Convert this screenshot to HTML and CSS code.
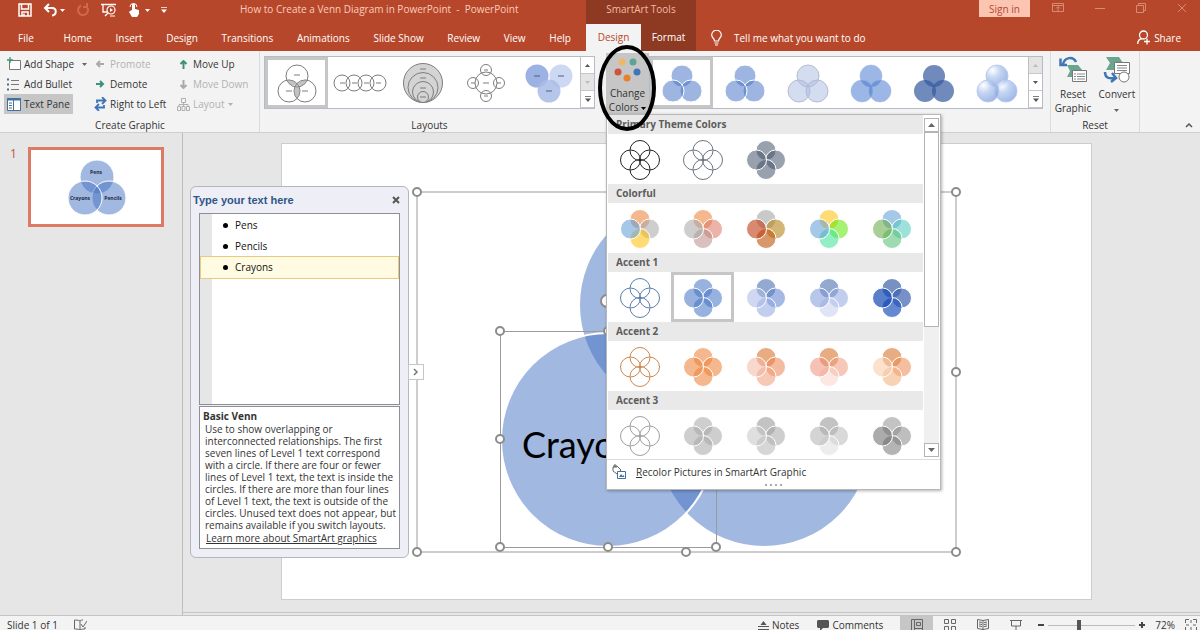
FILE: index.html
```html
<!DOCTYPE html>
<html lang="en">

<head>
    <meta charset="utf-8">
    <title>How to Create a Venn Diagram in PowerPoint - PowerPoint</title>
    <link rel="stylesheet" href="styles.css">
</head>

<body>

    <svg class="defs" width="0" height="0">
        <symbol id="flower" viewBox="-21 -21 42 42">
            <circle class="c-top" cx="0" cy="-9.5" r="10" />
            <circle class="c-right" cx="9.5" cy="0" r="10" />
            <circle class="c-bottom" cx="0" cy="9.5" r="10" />
            <circle class="c-left" cx="-9.5" cy="0" r="10" />
        </symbol>
        <symbol id="venn" viewBox="-30 -23 60 46">
            <circle cx="0" cy="-7" r="11" />
            <circle cx="9" cy="8" r="11" />
            <circle cx="-9" cy="8" r="11" />
        </symbol>
        <symbol id="up" viewBox="0 0 7 4"><path d="M0 4h7L3.500 0z" /></symbol>
        <symbol id="down" viewBox="0 0 7 4"><path d="M0 0h7L3.500 4z" /></symbol>
        <symbol id="more" viewBox="0 0 7 7"><path d="M0 0h7v1H0zM0 3h7L3.500 7z" /></symbol>
        <radialGradient id="gloss" cx=".3" cy=".25" r=".8">
            <stop offset="0" stop-color="#fff" />
            <stop offset=".4" stop-color="#b4caf0" />
            <stop offset="1" stop-color="#7f9fdc" />
        </radialGradient>
    </svg>

    <header class="top">
        <div class="title-row">
            <div class="quick">
                <button aria-label="Save"><svg width="14" height="14" viewBox="0 0 14 14"><path d="M1 1h12v12H1zM3.500 1v5h7V1M4 13V9h6v4M6 10.500V13" fill="none" stroke="#fff" stroke-width="1.500" /></svg></button>
                <button aria-label="Undo"><svg width="22" height="14" viewBox="0 0 22 14"><path d="M6 1L2 5l4 4M2 5h7c5 0 5 7 0 7.500" fill="none" stroke="#fff" stroke-width="2" /><path d="M17 6h5l-2.500 3z" fill="#fff" /></svg></button>
                <button aria-label="Redo"><svg width="14" height="14" viewBox="0 0 14 14"><path d="M5 2.500A5 5 0 1 0 11 4M11 0v4H7" fill="none" stroke="#d0694c" stroke-width="2" /></svg></button>
                <button aria-label="Start from beginning"><svg width="16" height="14" viewBox="0 0 16 14"><path d="M0 1.500h15M2 2v7h4M4 13l3-3" fill="none" stroke="#fff" stroke-width="1.300" /><circle cx="10" cy="7" r="4" fill="#b7472a" stroke="#fff" stroke-width="1.200" /><path d="M9 5l3 2-3 2z" fill="#fff" /><path d="M9 13h5" stroke="#fff" /></svg></button>
                <button aria-label="Touch mode"><svg width="22" height="14" viewBox="0 0 22 14"><path d="M4 7V2a1.500 1.500 0 0 1 3 0v4l4 1v4l-2 3H4L1 9l1-1z" fill="#fff" /><path d="M2 4a3.500 3.500 0 1 1 7 0" fill="none" stroke="#fff" /><path d="M17 6h5l-2.500 3z" fill="#fff" /></svg></button>
                <button aria-label="Customize"><svg width="6" height="6" fill="#fff"><use href="#more" /></svg></button>
            </div>
            <div class="doc-title">How to Create a Venn Diagram in PowerPoint&nbsp; -&nbsp; PowerPoint</div>
        </div>
        <div class="context">SmartArt Tools</div>
        <div class="window-row">
            <button class="sign-in">Sign in</button>
            <div class="win-buttons">
                <button aria-label="Ribbon options"><svg width="12" height="10" viewBox="0 0 12 10"><path d="M.5.5h11v8H.5zM.5 2.500h11M6 8V4M4 5.500l2-2 2 2" /></svg></button>
                <button aria-label="Minimize"><svg width="10" height="10" viewBox="0 0 10 10"><path d="M0 5.500h10" /></svg></button>
                <button aria-label="Restore"><svg width="10" height="10" viewBox="0 0 10 10"><path d="M.5 2.500h7v7h-7zM2.500 2V.5h7v7H8" /></svg></button>
                <button aria-label="Close"><svg width="10" height="10" viewBox="0 0 10 10"><path d="M1 1l8 8M9 1L1 9" /></svg></button>
            </div>
        </div>
        <nav class="tabs">
            <a href="#">File</a>
            <a href="#">Home</a>
            <a href="#">Insert</a>
            <a href="#">Design</a>
            <a href="#">Transitions</a>
            <a href="#">Animations</a>
            <a href="#">Slide Show</a>
            <a href="#">Review</a>
            <a href="#">View</a>
            <a href="#">Help</a>
        </nav>
        <nav class="context-tabs">
            <a href="#" class="active">Design</a>
            <a href="#">Format</a>
        </nav>
        <div class="tell-row">
            <a href="#" class="tell"><svg width="11" height="16" viewBox="0 0 11 16"><path d="M3.500 11C3.500 8 .7 8 .7 5a4.800 4.800 0 0 1 9.600 0c0 3-2.800 3-2.800 6zM3.500 13h4M4 15h3" fill="none" stroke="#fff" stroke-width="1.200" /></svg>Tell me what you want to do</a>
            <a href="#" class="share"><svg width="13" height="15" viewBox="0 0 13 15"><circle cx="6.500" cy="5" r="4" fill="none" stroke="#fff" stroke-width="1.300" /><path d="M.7 14c0-3 2-5 4.500-5.500M10 8.500v6M7 11.500h6" fill="none" stroke="#fff" stroke-width="1.300" /></svg>Share</a>
        </div>
    </header>

    <section class="ribbon">
        <div class="group create">
            <div class="commands">
                <button><svg width="14" height="14" viewBox="0 0 14 14"><path d="M2.500 3.500h11v9h-11z" fill="#fff" stroke="#777" /><path d="M3 0v6M0 3h6" stroke="#3c9277" stroke-width="1.300" /></svg>Add Shape<svg class="caret" width="5" height="3"><use href="#down" /></svg></button>
                <button disabled><svg class="arrow" width="9" height="8" viewBox="0 0 9 8"><path d="M8 4H1M4 1L1 4l3 3" /></svg>Promote</button>
                <button><svg class="arrow green" width="9" height="9" viewBox="0 0 9 9"><path d="M4.500 9V1M1.500 4l3-3 3 3" /></svg>Move Up</button>
                <button><svg width="14" height="13" viewBox="0 0 14 13"><path d="M0 1.500h2M0 6.500h2M0 11.500h2" stroke="#41719c" stroke-width="2" /><path d="M4 2.500h8M4 6.500h8M4 11.500h8" stroke="#777" /></svg>Add Bullet</button>
                <button><svg class="arrow green" width="9" height="8" viewBox="0 0 9 8"><path d="M0 4h7M4 1l3 3-3 3" /></svg>Demote</button>
                <button disabled><svg class="arrow" width="9" height="9" viewBox="0 0 9 9"><path d="M4.500 0v8M1.500 5l3 3 3-3" /></svg>Move Down</button>
                <button class="pressed"><svg width="14" height="13" viewBox="0 0 14 13"><path d="M.5.5h13v12H.5z" fill="#fff" stroke="#41719c" /><path d="M0 1.500h14" stroke="#41719c" stroke-width="2" /><path d="M6.500 2v10M2 5h3M2 7.500h3M2 10h3" stroke="#41719c" /></svg>Text Pane</button>
                <button><svg width="13" height="14" viewBox="0 0 13 14"><path d="M3 6V3.500h8M8 0l3.500 3.500L8 7M10 8v2.500H2M5 7l-3.500 3.500L5 14" fill="none" stroke="#3f76b5" stroke-width="1.800" /></svg>Right to Left</button>
                <button disabled><svg width="13" height="13" viewBox="0 0 13 13"><path d="M4.500.5h4v4h-4zM.5 8.500h3v4h-3zM5 8.500h3v4H5zM9.500 8.500h3v4h-3zM6.500 4.500v4M2 8.500v-2h9v2" fill="none" stroke="#b0b0b0" /></svg>Layout<svg class="caret near" width="5" height="3"><use href="#down" /></svg></button>
            </div>
            <div class="group-label">Create Graphic</div>
        </div>

        <div class="group layouts">
            <div class="gallery">
                <button class="item chosen" aria-label="Basic Venn"><svg class="line-art" viewBox="-30 -23 60 46"><circle cx="0" cy="-7" r="11" /><circle cx="-8" cy="8" r="11" /><circle cx="8" cy="8" r="11" /><path class="shade" d="M-10.500-3C-5-4-1-1 0 2c2-3 6-6 10.500-5C7 4 4 4 0 1c-4 3-7 2-10.500-4zM0 1c4 5 4 10 0 15-4-5-4-10 0-15z" /><path d="M-3-8h6M-11 8h6M5 8h6" /></svg></button>
                <button class="item" aria-label="Linear Venn"><svg class="line-art" viewBox="-30 -23 60 46"><circle cx="-18" cy="0" r="8" /><circle cx="-6" cy="0" r="8" /><circle cx="6" cy="0" r="8" /><circle cx="18" cy="0" r="8" /><path d="M-20 0h5M-8 0h5M4 0h5M16 0h5" /></svg></button>
                <button class="item" aria-label="Stacked Venn"><svg class="line-art grey" viewBox="-30 -23 60 46"><circle cx="0" cy="0" r="19.500" /><circle cx="0" cy="4.500" r="15" /><circle cx="0" cy="9" r="10.500" /><circle cx="0" cy="14" r="5.500" /><path d="M-3-14h6M-3-5h6M-3 5h6M-3 14h6" /></svg></button>
                <button class="item" aria-label="Radial Venn"><svg class="line-art" viewBox="-30 -23 60 46"><circle cx="0" cy="0" r="11" /><circle cx="0" cy="-13" r="5.500" /><circle cx="0" cy="13" r="5.500" /><circle cx="-13" cy="0" r="5.500" /><circle cx="13" cy="0" r="5.500" /><path d="M-3 0h6M-2-13h4M-2 13h4M-15 0h4M11 0h4" /></svg></button>
                <button class="item" aria-label="Interconnected Rings"><svg viewBox="-30 -23 60 46"><circle cx="-12" cy="-7" r="11.500" fill="#9bb2e2" /><circle cx="12" cy="-7" r="11.500" fill="#cdd8f3" /><circle cx="0" cy="8" r="11.500" fill="#a9bce8" fill-opacity=".85" /><path d="M-15-7h6M9-7h6M-3 8h6" stroke="#4b5f92" /></svg></button>
                <div class="scroller">
                    <button aria-label="Row up"><svg width="5" height="3"><use href="#up" /></svg></button>
                    <button aria-label="Row down" disabled><svg width="5" height="3"><use href="#down" /></svg></button>
                    <button aria-label="More layouts"><svg width="6" height="6"><use href="#more" /></svg></button>
                </div>
            </div>
            <div class="group-label">Layouts</div>
        </div>

        <div class="group styles">
            <div class="color-picker">
                <button class="change-colors">
                    <svg width="28" height="26" viewBox="0 0 28 26"><circle cx="8" cy="5" r="3.500" fill="#ebb968" /><circle cx="19" cy="5" r="3.500" fill="#5ea492" /><circle cx="4" cy="15" r="3.500" fill="#d2513c" /><circle cx="23" cy="15" r="3.500" fill="#3f76b5" /><circle cx="13" cy="21" r="3.500" fill="#e5812f" /></svg>
                    <span>Change</span>
                    <span>Colors <svg width="5" height="3"><use href="#down" /></svg></span>
                </button>
                <div class="menu">
                    <div class="menu-body">
                        <div class="menu-list" id="menuList"></div>
                        <div class="scrollbar">
                            <button aria-label="Scroll up"><svg width="7" height="4"><use href="#up" /></svg></button>
                            <div class="thumb"></div>
                            <button aria-label="Scroll down"><svg width="7" height="4"><use href="#down" /></svg></button>
                        </div>
                    </div>
                    <button class="recolor"><svg width="15" height="15" viewBox="0 0 15 15"><path d="M2 3l4-1 4 4-4 4-4-3zM3 4V1h2v3" fill="#fff" stroke="#666" /><path d="M6.500 7.500h8v7h-8z" fill="#fff" stroke="#41719c" /><path d="M8 13l2-3 1.500 2 1-1 1 2z" fill="#41719c" /></svg><span><u>R</u>ecolor Pictures in SmartArt Graphic</span></button>
                    <div class="grip"><i></i><i></i><i></i><i></i></div>
                </div>
                <svg class="marker" viewBox="0 0 60 88"><ellipse cx="30" cy="44" rx="27" ry="41" /></svg>
            </div>
            <div class="gallery">
                <button class="item chosen" aria-label="Simple Fill"><svg class="v-simple"><use href="#venn" /></svg></button>
                <button class="item" aria-label="White Outline"><svg class="v-simple"><use href="#venn" /></svg></button>
                <button class="item" aria-label="Subtle Effect"><svg class="v-subtle"><use href="#venn" /></svg></button>
                <button class="item" aria-label="Moderate Effect"><svg class="v-moderate"><use href="#venn" /></svg></button>
                <button class="item" aria-label="Intense Effect"><svg class="v-intense"><use href="#venn" /></svg></button>
                <button class="item" aria-label="Polished"><svg class="v-polished"><use href="#venn" /></svg></button>
                <div class="scroller">
                    <button aria-label="Row up" disabled><svg width="5" height="3"><use href="#up" /></svg></button>
                    <button aria-label="Row down"><svg width="5" height="3"><use href="#down" /></svg></button>
                    <button aria-label="More styles"><svg width="6" height="6"><use href="#more" /></svg></button>
                </div>
            </div>
        </div>

        <div class="group reset">
            <div class="big-buttons">
                <button><svg width="28" height="27" viewBox="0 0 28 27"><path d="M8 9h11l5 6-3 6H8l3-6z" fill="#6ba58e" /><path d="M13.500 14.500h14v11h-14z" fill="#fff" stroke="#777" /><path d="M15 18h2m1 0h8M15 20.500h2m1 0h8M15 23h2m1 0h8" stroke="#888" /><path d="M17 6C14 0 6 1 4 8M1.500 2.500V9H8" fill="none" stroke="#3f76b5" stroke-width="2.500" /></svg><span>Reset</span><span>Graphic</span></button>
                <button><svg width="28" height="27" viewBox="0 0 28 27"><path d="M3 1h13l4 6-4 7H3l4-7z" fill="#6ba58e" /><path d="M11.500 6.500h15v11h-15z" fill="#fff" stroke="#777" /><path d="M14 9.500h10M14 12h10M14 14.500h10" stroke="#888" /><circle cx="21" cy="21" r="5" fill="#fff" stroke="#777" /><path d="M2 16c0 6 4 7 10 6M9 17l4 5-5 4" fill="none" stroke="#3f76b5" stroke-width="2.500" /></svg><span>Convert</span><span><svg width="5" height="3"><use href="#down" /></svg></span></button>
            </div>
            <div class="group-label">Reset</div>
        </div>
        <button class="collapse" aria-label="Collapse the ribbon"><svg width="8" height="6" viewBox="0 0 8 6"><path d="M1 5l3-3 3 3" fill="none" stroke="#555" stroke-width="1.500" /></svg></button>
    </section>

    <main class="work">
        <aside class="thumbs">
            <span class="num">1</span>
            <a href="#" class="thumb-slide" aria-label="Slide 1">
                <svg viewBox="0 0 130 74">
                    <g fill="#4472c4" fill-opacity=".5" stroke="#fff"><circle cx="66" cy="27" r="17" /><circle cx="78" cy="48" r="17" /><circle cx="54" cy="48" r="17" /></g>
                    <text x="65" y="24">Pens</text>
                    <text x="49" y="50">Crayons</text>
                    <text x="82" y="50">Pencils</text>
                </svg>
            </a>
        </aside>

        <div class="stage">
            <div class="slide">
                <svg class="diagram" viewBox="410 185 553 374">
                    <g class="shapes">
                        <circle cx="686" cy="305" r="107" />
                        <circle cx="764" cy="440" r="107" />
                        <circle cx="608" cy="440" r="107" />
                    </g>
                    <text x="522" y="458">Crayons</text>
                    <path class="frame" d="M417 192h539v360H417zM500.500 331.500h216v216h-216z" />
                    <g class="handles">
                        <circle cx="417" cy="192" r="4" />
                        <circle cx="956" cy="192" r="4" />
                        <circle cx="956" cy="372" r="4" />
                        <circle cx="417" cy="552" r="4" />
                        <circle cx="686" cy="552" r="4" />
                        <circle cx="956" cy="552" r="4" />
                        <circle cx="500" cy="331" r="4" />
                        <circle cx="608" cy="331" r="4" />
                        <circle cx="500" cy="439" r="4" />
                        <circle cx="500" cy="547" r="4" />
                        <circle cx="608" cy="547" r="4" />
                        <circle cx="716" cy="547" r="4" />
                        <circle cx="607" cy="301" r="6" />
                    </g>
                </svg>
            </div>

            <section class="text-pane">
                <div class="pane-head">
                    <h2>Type your text here</h2>
                    <button aria-label="Close"><svg width="8" height="8" viewBox="0 0 8 8"><path d="M1 1l6 6M7 1L1 7" stroke="#555" stroke-width="2" /></svg></button>
                </div>
                <ul>
                    <li>Pens</li>
                    <li>Pencils</li>
                    <li class="current">Crayons</li>
                </ul>
                <div class="about">
                    <h3>Basic Venn</h3>
                    <p>Use to show overlapping or<br>interconnected relationships. The first<br>seven lines of Level 1 text correspond<br>with a circle. If there are four or fewer<br>lines of Level 1 text, the text is inside the<br>circles. If there are more than four lines<br>of Level 1 text, the text is outside of the<br>circles. Unused text does not appear, but<br>remains available if you switch layouts.</p>
                    <a href="#">Learn more about SmartArt graphics</a>
                </div>
                <button class="pane-toggle" aria-label="Toggle text pane"><svg width="6" height="8" viewBox="0 0 6 8"><path d="M1 1l3 3-3 3" fill="none" stroke="#777" stroke-width="1.500" /></svg></button>
            </section>
        </div>
    </main>

    <footer class="status">
        <span>Slide 1 of 1</span>
        <button class="spell" aria-label="Spelling"><svg width="13" height="12" viewBox="0 0 13 12"><path d="M6 2v9M6 2C4 1 2 1 .5 1v9C2 10 4 10 6 11c2-1 3-1 5-1V8M6 2c1-1 2-1 3-1M7 5l2 3 4-6" fill="none" stroke="#666" /></svg></button>
        <button class="notes"><svg width="11" height="9" viewBox="0 0 11 9"><path d="M0 5.500h11M0 8.500h11" stroke="#555" /><path d="M2.500 4h6L5.500 0z" fill="#555" /></svg>Notes</button>
        <button class="comments"><svg width="12" height="11" viewBox="0 0 12 11"><path d="M1 0h10l1 1v6l-1 1H6l-3 3V8H1L0 7V1z" fill="#555" /></svg>Comments</button>
        <div class="views">
            <button class="on" aria-label="Normal"><svg width="12" height="12" viewBox="0 0 12 12"><path d="M.5.5h11v11H.5zM3.500 1v10M5.500 3.500h4v3h-4zM4 9.500h7" /></svg></button>
            <button aria-label="Slide sorter"><svg width="12" height="12" viewBox="0 0 12 12"><path d="M.5.5h4v4h-4zM7.500.5h4v4h-4zM.5 7.500h4v4h-4zM7.500 7.500h4v4h-4z" /></svg></button>
            <button aria-label="Reading view"><svg width="12" height="12" viewBox="0 0 12 12"><path d="M6 2v9M6 1.500L.5.5v9l5.500 1 5.500-1v-9zM2 3l3 .5M2 5l3 .5M2 7l3 .5M10 3l-3 .5M10 5l-3 .5M10 7l-3 .5" /></svg></button>
            <button aria-label="Slide show"><svg width="12" height="12" viewBox="0 0 12 12"><path d="M0 1.500h12M1.500 2v5h9V2M6 7v4M3.500 11.500h5" /></svg></button>
        </div>
        <div class="zoom">
            <button aria-label="Zoom out"><svg width="6" height="6" viewBox="0 0 6 6"><path d="M0 3h6" /></svg></button>
            <input type="range" min="0" max="100" value="35" aria-label="Zoom">
            <button aria-label="Zoom in"><svg width="6" height="6" viewBox="0 0 6 6"><path d="M0 3h6M3 0v6" /></svg></button>
        </div>
        <span class="percent">72%</span>
        <button class="fit" aria-label="Fit slide"><svg width="12" height="12" viewBox="0 0 12 12"><path d="M.5 4V.5H4M8 .5h3.500V4M11.500 8v3.500H8M4 11.500H.5V8M6 1v3M6 8v3M1 6h3M8 6h3" /></svg></button>
    </footer>

    <script>
        // each swatch: colours for top, right, bottom, left and the fill strength
        var sections = [
            ["Primary Theme Colors", [
                { line: "#222" },
                { line: "#6d7584" },
                { fill: ["#44546a", "#44546a", "#44546a", "#44546a"] }
            ]],
            ["Colorful", [
                { fill: ["#ed7d31", "#a5a5a5", "#ffc000", "#5b9bd5"] },
                { fill: ["#ed7d31", "#dc7560", "#b98a86", "#a5a5a5"] },
                { fill: ["#a5a5a5", "#b5851a", "#c0530a", "#bf3a10"], alpha: 0.6 },
                { fill: ["#ffc000", "#5ce800", "#3ae291", "#5b9bd5"] },
                { fill: ["#5b9bd5", "#4cc9bd", "#4fbd70", "#62a840"] }
            ]],
            ["Accent 1", [
                { line: "#5b7fb0" },
                { fill: ["#4472c4", "#4472c4", "#4472c4", "#4472c4"], chosen: true },
                { fill: ["#3c62a8", "#5b80d0", "#8ea6e0", "#a9b8e6"] },
                { fill: ["#3c62a8", "#8ea6e0", "#c4cff0", "#7d98d8"] },
                { fill: ["#3c62a8", "#3c62b0", "#2455bd", "#1348b4"], alpha: 0.7 }
            ]],
            ["Accent 2", [
                { line: "#cf874e" },
                { fill: ["#ed7d31", "#ed7d31", "#ed7d31", "#ed7d31"] },
                { fill: ["#d6681c", "#ec8350", "#ee9a78", "#f3b7a4"] },
                { fill: ["#d6681c", "#f09a7c", "#f9d3cb", "#ee9078"] },
                { fill: ["#d6681c", "#ec8850", "#f2ad78", "#f6cba8"] }
            ]],
            ["Accent 3", [
                { line: "#a0a0a0" },
                { fill: ["#a5a5a5", "#a5a5a5", "#a5a5a5", "#a5a5a5"] },
                { fill: ["#929292", "#a5a5a5", "#b5b5b5", "#c5c5c5"] },
                { fill: ["#929292", "#bababa", "#dedede", "#b0b0b0"] },
                { fill: ["#929292", "#888", "#777", "#666"] }
            ]]
        ];

        var html = "";
        sections.forEach(function (section) {
            html += "<h4>" + section[0] + "</h4><div class='swatches'>";
            section[1].forEach(function (s, i) {
                var css;
                if (s.line) {
                    css = "--line:" + s.line + ";--alpha:0";
                } else {
                    css = "--t:" + s.fill[0] + ";--r:" + s.fill[1] + ";--b:" + s.fill[2] + ";--l:" + s.fill[3] + ";--alpha:" + (s.alpha || 0.55);
                }
                html += "<button class='swatch" + (s.chosen ? " chosen" : "") + "' aria-label='" + section[0] + " " + (i + 1) + "'>";
                html += "<svg width='42' height='42' style='" + css + "'><use href='#flower'/></svg></button>";
            });
            html += "</div>";
        });
        document.getElementById("menuList").innerHTML = html;
    </script>
</body>

</html>
```
FILE: styles.css
```css
* {
    box-sizing: border-box;
}

body,
html {
    margin: 0;
    height: 100%;
}

body {
    display: flex;
    flex-direction: column;
    overflow: hidden;
    background: #e6e6e6;
    color: #333;
    font-family: "Open Sans", "Noto Sans", sans-serif;
    font-size: 10px;
    line-height: 14px;
}

button {
    display: flex;
    align-items: center;
    justify-content: center;
    margin: 0;
    padding: 0;
    border: 0;
    background: none;
    color: inherit;
    font: inherit;
    white-space: nowrap;
}

a {
    color: inherit;
    text-decoration: none;
}

svg {
    flex: none;
}

.defs {
    position: absolute;
}

/* title bar and tabs */
.top {
    display: grid;
    grid-template-columns: 586px 110px 1fr;
    grid-template-rows: 24px 27px;
    background: #b7472a;
    color: #fff;
}

.title-row {
    display: flex;
    padding: 2px 0 0 18px;
}

.quick {
    display: flex;
    gap: 11px;
    height: 16px;
    width: 222px;
}

.doc-title {
    color: #f9cdbd;
}

.context {
    background: #8e3a22;
    color: #f4b9a4;
    padding-top: 2px;
    text-align: center;
}

.window-row {
    display: flex;
    justify-content: flex-end;
    align-items: flex-start;
    padding-right: 13px;
}

.sign-in {
    width: 51px;
    height: 17px;
    background: #fcc5b2;
    color: #b04a30;
}

.win-buttons {
    display: flex;
    gap: 31px;
    padding: 3px 0 0 22px;
    fill: none;
    stroke: #d78b75;
}

.tabs {
    display: flex;
    align-items: center;
    justify-content: space-between;
    padding: 0 15px 0 18px;
}

.tabs a:first-child {
    margin-right: 6px;
}

.context-tabs {
    display: flex;
    background: #8e3a22;
}

.context-tabs a {
    flex: 1;
    line-height: 27px;
    text-align: center;
}

.context-tabs .active {
    background: #f3f3f3;
    color: #b7472a;
}

.tell-row {
    display: flex;
    align-items: center;
    justify-content: space-between;
    padding: 0 19px 0 15px;
}

.tell,
.share {
    display: flex;
    align-items: center;
    gap: 12px;
}

.share {
    gap: 4px;
}

/* ribbon */
.ribbon {
    display: flex;
    height: 82px;
    flex: none;
    background: #f3f3f3;
    border-bottom: 1px solid #cfcfcf;
}

.group {
    display: flex;
    flex-direction: column;
}

.group-label {
    margin-top: auto;
    height: 14px;
    text-align: center;
}

.create,
.layouts,
.styles,
.reset {
    height: 81px;
}

.create {
    width: 260px;
    padding-top: 3px;
    box-shadow: inset -1px 0 #dcdcdc;
}

.commands {
    display: grid;
    grid-template-columns: 90px 83px 83px;
    grid-auto-rows: 20px;
    padding-left: 4px;
}

.commands button {
    gap: 3px;
    justify-self: start;
    padding: 0 3px;
}

.commands button:nth-child(3n+2),
.commands button:nth-child(3n) {
    gap: 3px;
    padding: 0;
}

.commands .arrow {
    width: 13px;
}

.commands button:disabled {
    color: #b2b2b2;
}

.commands .pressed {
    background: #c6c6c6;
    width: 69px;
    justify-content: flex-start;
}

.arrow {
    fill: none;
    stroke: #aaa;
    stroke-width: 2;
}

.green {
    stroke: #3c9277;
}

.caret {
    fill: #666;
    margin-left: 5px;
}

.near {
    fill: #b2b2b2;
    margin-left: 0;
}

.layouts {
    padding: 5px 11px 0 4px;
}

.gallery {
    display: flex;
    height: 53px;
    border: 1px solid #b4bdc6;
    background: #fff;
}

.item {
    width: 63px;
    border: 3px solid transparent;
}

.item svg {
    width: 60px;
    height: 46px;
    margin: 0 -3px;
}

.chosen {
    border: 3px solid #c6c6c6;
}

.scroller {
    width: 14px;
    display: flex;
    flex-direction: column;
    border-left: 1px solid #c0c0c0;
}

.scroller button {
    flex: 1;
    fill: #555;
    border-bottom: 1px solid #c8c8c8;
}

.scroller button:disabled {
    background: #e4e4e4;
    fill: #bbb;
}

.line-art {
    fill: none;
    stroke: #7d7d7d;
}

.line-art .shade {
    fill: #999;
    fill-opacity: .6;
    stroke: none;
}

.grey {
    fill: #d4d4d4;
}

.v-simple {
    fill: #4472c4;
    fill-opacity: .52;
    stroke: #fff;
}

.v-subtle {
    fill: #a9b9e2;
    fill-opacity: .5;
    stroke: #b4bdd4;
}

.v-moderate {
    fill: #4a7ad0;
    fill-opacity: .55;
    stroke: #9db6e4;
    stroke-width: .5;
}

.v-intense {
    fill: #3559a0;
    fill-opacity: .7;
}

.v-polished {
    fill: url(#gloss);
    fill-opacity: .75;
    stroke: #b9caec;
}

.styles {
    flex-direction: row;
    padding-top: 5px;
    width: 444px;
}

.color-picker {
    position: relative;
}

.change-colors {
    flex-direction: column;
    width: 43px;
    height: 61px;
    margin-top: -3px;
    padding-top: 4px;
    background: #c6c6c6;
}

.change-colors > svg {
    margin-bottom: 3px;
}

.change-colors span svg {
    vertical-align: middle;
}

.marker {
    position: absolute;
    left: -9px;
    top: -12px;
    width: 60px;
    height: 88px;
    z-index: 3;
    fill: none;
    stroke: #000;
    stroke-width: 4;
    pointer-events: none;
}

/* change colors menu */
.menu {
    position: absolute;
    z-index: 2;
    left: 0;
    top: 58px;
    width: 335px;
    background: #fff;
    border: 1px solid #b8b8b8;
    box-shadow: 1px 1px 3px rgba(0, 0, 0, .3);
}

.menu-body {
    display: flex;
    height: 345px;
    border-bottom: 1px solid #dcdcdc;
}

.menu-list {
    flex: 1;
    padding: 0 1px;
    overflow: hidden;
}

.menu h4 {
    margin: 0;
    padding-left: 8px;
    background: #e9e9e9;
    color: #5c5c5c;
    font-size: 10px;
    font-weight: 700;
    line-height: 19px;
}

.swatches {
    display: flex;
    height: 50px;
}

.swatch {
    width: 63px;
    height: 50px;
    padding-top: 2px;
}

.swatch svg {
    stroke: var(--line, #fff);
    fill-opacity: var(--alpha);
}

.c-top {
    fill: var(--t);
}

.c-right {
    fill: var(--r);
}

.c-bottom {
    fill: var(--b);
}

.c-left {
    fill: var(--l);
}

.scrollbar {
    width: 15px;
    display: flex;
    flex-direction: column;
    margin: 3px 1px 2px 0;
    background: #f0f0f0;
}

.scrollbar button {
    height: 14px;
    background: #fff;
    border: 1px solid #b4b4b4;
    fill: #666;
}

.thumb {
    height: 195px;
    margin-bottom: auto;
    background: #fff;
    border: 1px solid #b4b4b4;
}

.recolor {
    height: 23px;
    gap: 10px;
    padding-left: 4px;
}

.grip {
    display: flex;
    justify-content: center;
    gap: 3px;
    height: 6px;
    padding-top: 1px;
}

.grip i {
    width: 2px;
    height: 2px;
    background: #aaa;
}

.reset {
    width: 90px;
    padding-top: 5px;
    border-left: 1px solid #dcdcdc;
    border-right: 1px solid #dcdcdc;
}

.big-buttons {
    display: flex;
    justify-content: space-around;
}

.big-buttons button {
    flex-direction: column;
    justify-content: flex-start;
    fill: #666;
}

.big-buttons button > svg {
    margin-bottom: 4px;
}

.collapse {
    margin: auto 7px 4px auto;
}

/* work area */
.work {
    flex: 1;
    display: flex;
    min-height: 0;
}

.thumbs {
    width: 183px;
    display: flex;
    align-items: flex-start;
    padding: 14px 18px 0 10px;
    border-right: 1px solid #bdbdbd;
}

.num {
    width: 18px;
    color: #c8553a;
    font-size: 12px;
}

.thumb-slide {
    flex: 1;
    border: 3px solid #dd7a63;
    background: #fff;
}

.thumb-slide svg {
    display: block;
}

.thumb-slide text {
    font: bold 5px "Open Sans", sans-serif;
    fill: #222b45;
    text-anchor: middle;
}

.stage {
    position: relative;
    flex: 1;
    display: flex;
    margin-bottom: 3px;
    padding: 10px 108px 12px 98px;
    border-bottom: 1px solid #c4c4c4;
}

.slide {
    position: relative;
    flex: 1;
    background: #fff;
    border: 1px solid #cdcdcd;
}

.diagram {
    position: absolute;
    left: 128px;
    top: 41px;
    width: 553px;
    height: 374px;
}

.shapes {
    fill: #4472c4;
    fill-opacity: .5;
    stroke: #fff;
    stroke-width: 2;
}

.diagram text {
    font-family: Lato, sans-serif;
    font-size: 36px;
    fill: #000;
}

.frame {
    fill: none;
    stroke: #9a9a9a;
}

.handles {
    fill: #fff;
    stroke: #8c8c8c;
    stroke-width: 2;
}

.text-pane {
    position: absolute;
    left: 7px;
    top: 53px;
    width: 219px;
    padding: 0 8px 8px;
    background: #eeeef6;
    border: 1px solid #b5b5bd;
    border-radius: 6px;
}

.pane-head {
    display: flex;
    align-items: center;
    justify-content: space-between;
    height: 26px;
    margin: 0 0 0 -6px;
}

.pane-head h2 {
    margin: 0;
    color: #2f5686;
    font: bold 11px "Liberation Sans", sans-serif;
}

.text-pane ul {
    height: 192px;
    margin: 0 0 1px;
    padding: 1px;
    list-style: none;
    border: 1px solid #8f8f95;
    background: linear-gradient(90deg, #e6e6e6 12px, #fff 12px);
}

.text-pane li {
    height: 21px;
    padding-left: 34px;
    line-height: 21px;
    color: #111;
}

.text-pane li::before {
    content: "";
    display: inline-block;
    width: 5px;
    height: 5px;
    margin: 0 7px 1px -12px;
    border-radius: 50%;
    background: #000;
}

.text-pane .current {
    background: #fffbe3;
    outline: 1px solid #e9cb80;
}

.about {
    height: 143px;
    padding: 2px 3px;
    background: #fff;
    border: 1px solid #8f8f95;
    line-height: 12px;
}

.about h3 {
    margin: 0;
    font-size: 10px;
    line-height: 14px;
}

.about p {
    margin: 0 0 1px 2px;
    white-space: nowrap;
}

.about a {
    margin-left: 3px;
    text-decoration: underline;
}

.pane-toggle {
    position: absolute;
    left: 217px;
    top: 177px;
    width: 16px;
    height: 16px;
    background: #fff;
    border: 1px solid #c4c4cc;
}

/* status bar */
.status {
    flex: none;
    display: flex;
    align-items: flex-start;
    height: 14px;
    padding: 0 3px 0 7px;
    background: #f3f3f3;
    box-shadow: 0 -1px #c4c4c4;
    line-height: 18px;
}

.status button {
    height: 18px;
    gap: 3px;
}

.spell {
    margin-left: 16px;
}

.notes {
    margin-left: auto;
}

.comments {
    margin: 0 17px 0 18px;
}

.views {
    display: flex;
}

.views button {
    width: 33px;
}

.views .on {
    background: #c6c6c6;
}

.views svg,
.fit svg {
    fill: none;
    stroke: #666;
}

.zoom {
    display: flex;
    margin: 0 8px 0 4px;
}

.zoom button {
    width: 10px;
    stroke: #444;
    stroke-width: 2;
}

.zoom input {
    appearance: none;
    width: 87px;
    height: 18px;
    margin: 0 2px;
    background: linear-gradient(#bbb, #bbb) center / 100% 1px no-repeat;
}

.zoom input::-webkit-slider-thumb {
    appearance: none;
    width: 4px;
    height: 11px;
    background: #555;
}

.fit {
    margin-left: 10px;
}
```
